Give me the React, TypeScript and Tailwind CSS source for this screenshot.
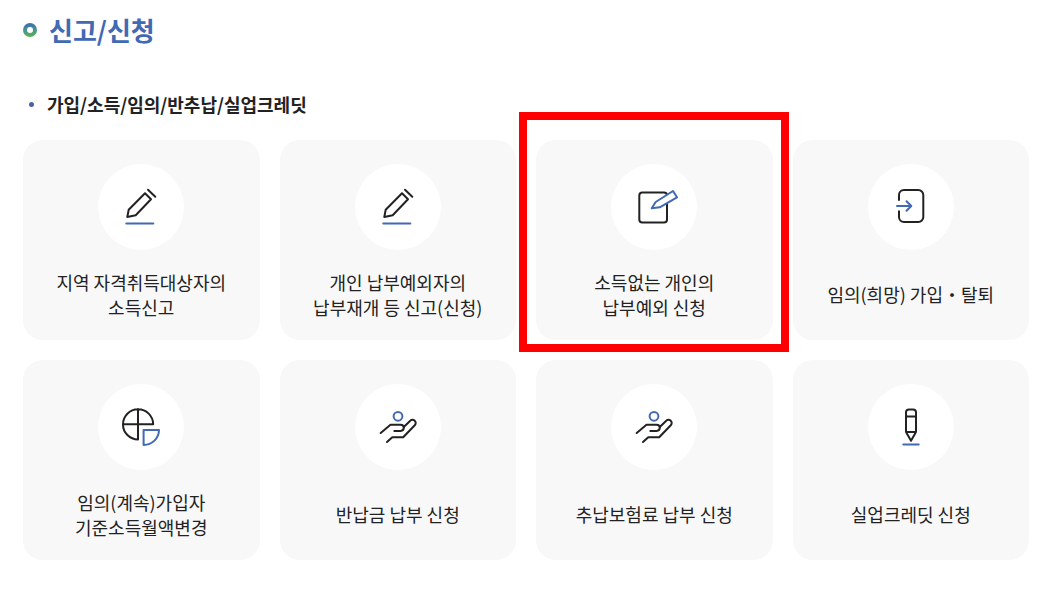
import type { ReactNode } from "react"

const INK = "#222222"
const BLUE = "#4169b4"

function PencilIcon() {
  return (
    <>
      <path d="M47 29.3 53 35.3 37.7 51.3 29.3 53 30.7 45.7Z" stroke={INK} />
      <path d="M50 25.7 57.3 32.7" stroke={INK} />
      <path d="M28.3 59.5H55.3" stroke={BLUE} />
    </>
  )
}

function NoteIcon() {
  return (
    <>
      <rect x="28.3" y="28.4" width="27.7" height="30" rx="3" stroke={INK} />
      <path d="M62 27 66 33.3 48.7 43.3 40.7 44.3 44.7 38Z" stroke={BLUE} fill="#fff" />
    </>
  )
}

function EnterIcon() {
  return (
    <>
      <path d="M31 36V31A5 5 0 0 1 36 26H50.3A5 5 0 0 1 55.3 31V53A5 5 0 0 1 50.3 58H36A5 5 0 0 1 31 53V47.3" stroke={INK} />
      <path d="M29 42H43M38.5 37.2 43.3 42 38.5 46.8" stroke={BLUE} />
    </>
  )
}

function PieIcon() {
  return (
    <>
      <path d="M55.2 40.2A15.1 15.1 0 1 0 40 55.5V25M25 40.2H55.2" stroke={INK} />
      <path d="M45.6 45.9H61A15.3 15.3 0 0 1 45.6 61Z" stroke={BLUE} />
    </>
  )
}

function HandIcon() {
  return (
    <>
      <circle cx="43" cy="32.3" r="4.4" stroke={BLUE} />
      <path d="M25.7 49 35.5 40.8H45.5Q48.8 40.8 48.8 43.8T45.5 46.9H39.3" stroke={INK} />
      <path d="M48.8 43 55 37A3.2 3.2 0 0 1 60 41L48.2 53.2H37.3L32 58" stroke={INK} />
    </>
  )
}

function CrayonIcon() {
  return (
    <>
      <path d="M38 48V28.3Q38 25.4 41 25.4H45Q48 25.4 48 28.3V48L43 56.8ZM38 32.4H48M38 48H48" stroke={INK} />
      <path d="M35.3 60.5H50.7" stroke={BLUE} />
    </>
  )
}

type Service = { lines: string[]; icon: ReactNode; marked?: boolean }

const SERVICES: Service[] = [
  { lines: ["지역 자격취득대상자의", "소득신고"], icon: <PencilIcon /> },
  { lines: ["개인 납부예외자의", "납부재개 등 신고(신청)"], icon: <PencilIcon /> },
  { lines: ["소득없는 개인의", "납부예외 신청"], icon: <NoteIcon />, marked: true },
  { lines: ["임의(희망) 가입・탈퇴"], icon: <EnterIcon /> },
  { lines: ["임의(계속)가입자", "기준소득월액변경"], icon: <PieIcon /> },
  { lines: ["반납금 납부 신청"], icon: <HandIcon /> },
  { lines: ["추납보험료 납부 신청"], icon: <HandIcon /> },
  { lines: ["실업크레딧 신청"], icon: <CrayonIcon /> },
]

function ServiceCard({ service }: { service: Service }) {
  return (
    <li className="relative">
      <a href="#" className="flex min-h-[200px] flex-col items-center rounded-[20px] bg-[#f8f8f8] pt-6">
        <span className="size-[86px] shrink-0 rounded-full bg-white">
          <svg
            viewBox="0 0 86 86"
            className="size-full"
            fill="none"
            strokeWidth="2"
            strokeLinecap="round"
            strokeLinejoin="round"
            aria-hidden="true"
          >
            {service.icon}
          </svg>
        </span>
        <span className="flex flex-1 flex-col justify-center pb-px text-center text-[18px] leading-[25px]">
          {service.lines.map(line => (
            <span key={line}>{line}</span>
          ))}
        </span>
      </a>
      {service.marked && (
        <div className="pointer-events-none absolute -top-7 -right-4 -bottom-3 -left-[17px] z-10 border-8 border-[#ff0000]" />
      )}
    </li>
  )
}

export default function App() {
  return (
    <main className="bg-white pt-[11px] pr-[17px] pb-7 pl-[23px] font-['Noto_Sans_CJK_KR',sans-serif] text-[#222222]">
      <h1 className="flex items-center gap-3 text-[26px] leading-[37px] font-bold text-[#4169b4]">
        <span className="flex size-[14px] items-center justify-center rounded-full bg-linear-to-b from-[#4169b4] to-[#5bb548]">
          <span className="size-1.5 rounded-full bg-white" />
        </span>
        신고/신청
      </h1>

      <section className="mt-11">
        <h2 className="flex items-center gap-[13px] pl-1.5 text-[18px] leading-[25px] font-bold">
          <span className="size-[5px] rounded-full bg-[#4a5fb0]" />
          가입/소득/임의/반추납/실업크레딧
        </h2>
        <ul className="mt-[23px] grid grid-cols-4 gap-5">
          {SERVICES.map(service => (
            <ServiceCard key={service.lines[0]} service={service} />
          ))}
        </ul>
      </section>
    </main>
  )
}
